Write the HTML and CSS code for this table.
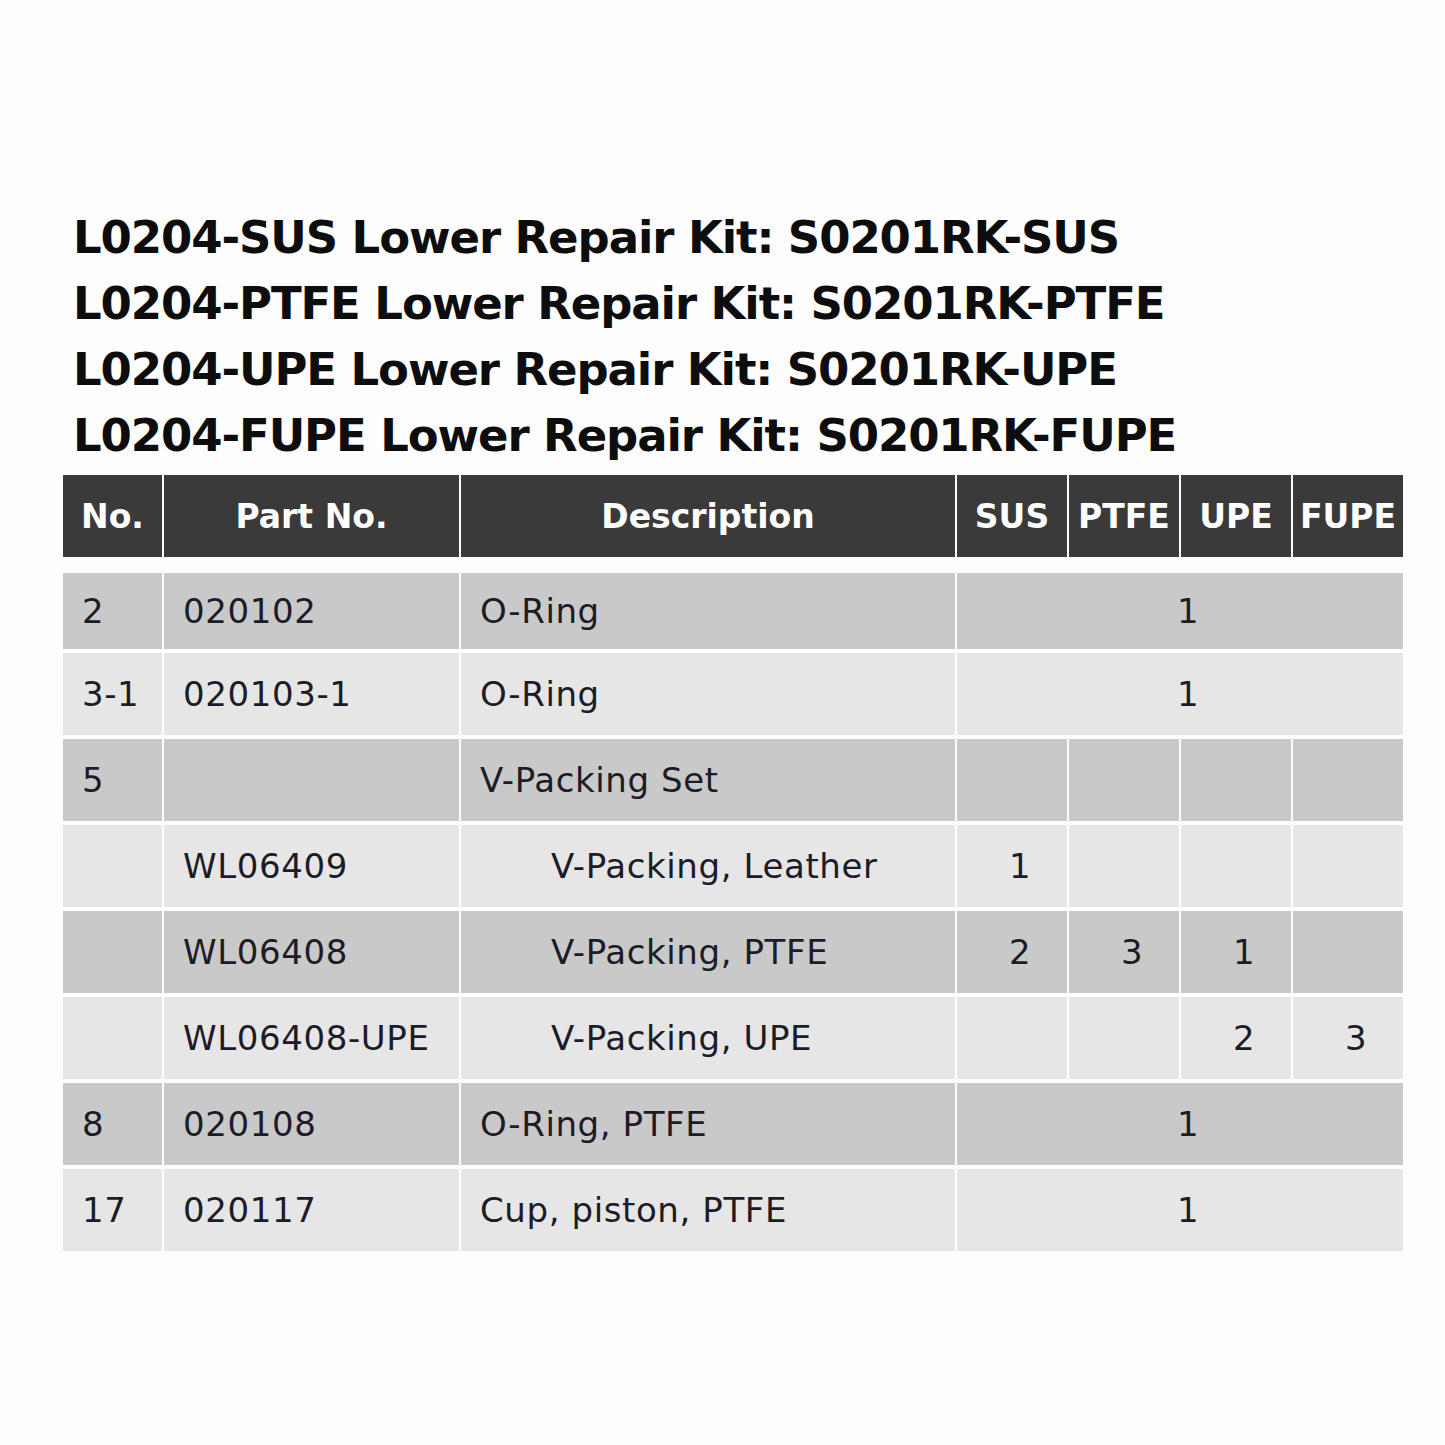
FILE: index.html
```html
<!DOCTYPE html>
<html>
<head>
<meta charset="utf-8">
<link rel="stylesheet" href="styles.css">
</head>
<body>
<div class="page">
  <div class="titles">
    <div class="title">L0204-SUS Lower Repair Kit: S0201RK-SUS</div>
    <div class="title">L0204-PTFE Lower Repair Kit: S0201RK-PTFE</div>
    <div class="title">L0204-UPE Lower Repair Kit: S0201RK-UPE</div>
    <div class="title">L0204-FUPE Lower Repair Kit: S0201RK-FUPE</div>
  </div>
  <table class="parts">
    <colgroup>
      <col class="c-no"><col class="c-part"><col class="c-desc"><col class="c-q"><col class="c-q"><col class="c-q"><col class="c-q">
    </colgroup>
    <thead>
      <tr><th>No.</th><th>Part No.</th><th>Description</th><th>SUS</th><th>PTFE</th><th>UPE</th><th>FUPE</th></tr>
    </thead>
    <tbody>
      <tr class="dark r1"><td>2</td><td>020102</td><td>O-Ring</td><td class="q" colspan="4">1</td></tr>
      <tr class="light"><td>3-1</td><td>020103-1</td><td>O-Ring</td><td class="q" colspan="4">1</td></tr>
      <tr class="dark"><td>5</td><td></td><td>V-Packing Set</td><td></td><td></td><td></td><td></td></tr>
      <tr class="light sub"><td></td><td>WL06409</td><td class="ind">V-Packing, Leather</td><td class="q">1</td><td></td><td></td><td></td></tr>
      <tr class="dark sub"><td></td><td>WL06408</td><td class="ind">V-Packing, PTFE</td><td class="q">2</td><td class="q">3</td><td class="q">1</td><td></td></tr>
      <tr class="light sub"><td></td><td>WL06408-UPE</td><td class="ind">V-Packing, UPE</td><td></td><td></td><td class="q">2</td><td class="q">3</td></tr>
      <tr class="dark"><td>8</td><td>020108</td><td>O-Ring, PTFE</td><td class="q" colspan="4">1</td></tr>
      <tr class="light"><td>17</td><td>020117</td><td>Cup, piston, PTFE</td><td class="q" colspan="4">1</td></tr>
    </tbody>
  </table>
</div>
</body>
</html>
```
FILE: styles.css
```css
html, body {
  margin: 0;
  padding: 0;
  background: #fdfdfd;
}
.page {
  padding: 205px 43px 0 61px;
  font-family: "DejaVu Sans", "Liberation Sans", sans-serif;
}
.titles {
  padding-left: 12px;
  margin-bottom: 2px;
}
.title {
  font-size: 45px;
  line-height: 66px;
  font-weight: 700;
  letter-spacing: -1.1px;
  color: #0d0d0d;
  white-space: nowrap;
}
.parts {
  border-collapse: separate;
  border-spacing: 2px 4px;
  width: 1343px;
  table-layout: fixed;
}
.c-no { width: 99px; }
.c-part { width: 295px; }
.c-desc { width: 494px; }
.c-q { width: 110px; }
.parts th {
  background: #3a3a3a;
  color: #ffffff;
  font-size: 33px;
  font-weight: 700;
  height: 82px;
  padding: 0;
  text-align: center;
  border-bottom: 12px solid #fdfdfd;
  white-space: nowrap;
  overflow: hidden;
}
.parts td {
  font-size: 34px;
  letter-spacing: 0.6px;
  color: #1c1c28;
  height: 82px;
  padding: 0 0 0 19px;
  white-space: nowrap;
}
.parts tr.r1 td { height: 76px; }
.parts tr.dark td { background: #c9c9c9; }
.parts tr.light td { background: #e6e6e6; }
.parts td.q {
  text-align: center;
  padding: 0 0 0 16px;
}
.parts td.ind { padding-left: 90px; }
```
